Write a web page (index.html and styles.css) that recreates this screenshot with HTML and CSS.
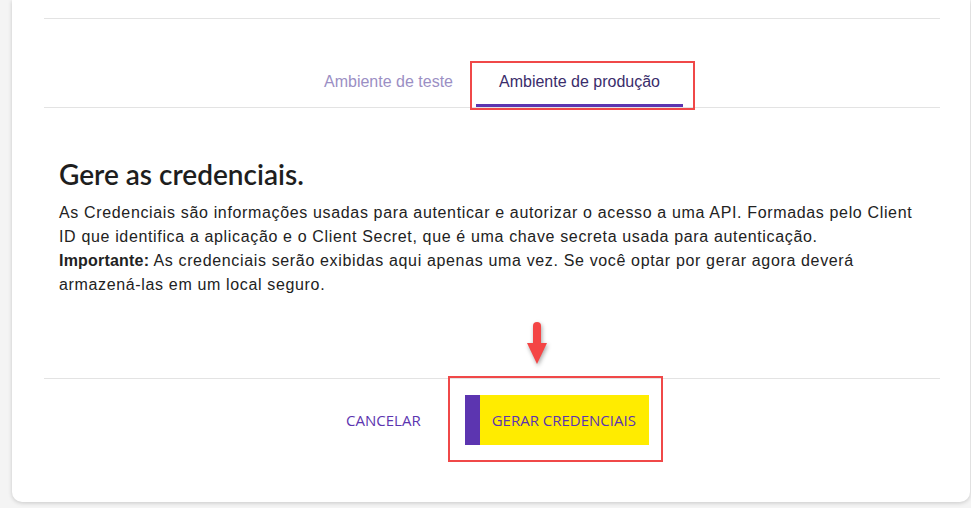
FILE: index.html
```html
<!DOCTYPE html>
<html lang="pt-BR">
<head>
  <meta charset="UTF-8"/>
  <title>Credenciais</title>
  <link rel="stylesheet" href="styles.css">
</head>
<body>
  <div class="card">
    <div class="top-rule"></div>

    <div class="tabs">
      <div class="tab">Ambiente de teste</div>
      <div class="tab active">Ambiente de produção</div>
    </div>

    <div class="content">
      <h2>Gere as credenciais.</h2>
      <p>
        As Credenciais são informações usadas para autenticar e autorizar o acesso a uma API. Formadas pelo Client
        ID que identifica a aplicação e o Client Secret, que é uma chave secreta usada para autenticação.<br>
        <strong>Importante:</strong> As credenciais serão exibidas aqui apenas uma vez. Se você optar por gerar agora deverá
        <span class="nowrap">armazená-las</span> em um local seguro.
      </p>
    </div>

    <!-- seta de destaque -->
    <div class="arrow">
      <svg width="26" height="44" viewBox="0 0 26 44">
        <path d="M13 4 L13 22" stroke="#f44545" stroke-width="8" stroke-linecap="round"/>
        <path d="M3 21 L23 21 L13 42 Z" fill="#f44545"/>
      </svg>
    </div>

    <div class="footer">
      <button class="btn-cancel">CANCELAR</button>
      <button class="btn-primary">GERAR CREDENCIAIS</button>
    </div>
  </div>
</body>
</html>
```

FILE: styles.css
```css
* {
  margin: 0; padding: 0; box-sizing: border-box;
}
body {
  background: #f4f4f4;
  font-family: "Liberation Sans", Arial, sans-serif;
  color: #222;
  height: 508px;
  overflow: hidden;
}
.card {
  position: relative;
  margin-left: 12px;
  width: 958px;
  height: 502px;
  background: #fff;
  border-radius: 0 0 10px 10px;
  box-shadow: 0 1px 4px rgba(0,0,0,0.18);
  padding: 18px 30px 0 32px;
}
.top-rule {
  border-top: 1px solid #e3e3e3;
}
.tabs {
  display: flex;
  justify-content: center;
  margin-top: 53px;
  border-bottom: 1px solid #e3e3e3;
}
.tab {
  position: relative;
  padding: 0 23px 15px;
  font-size: 16px;
  line-height: 20px;
  color: #9b8fc4;
}
.tab.active {
  color: #3a2d6b;
  border-bottom: 3px solid #5c35b0;
  padding-bottom: 12px;
}
/* moldura vermelha de anotação */
.tab.active::after {
  content: "";
  position: absolute;
  left: -6px; right: -12px; top: -11px; bottom: -6px;
  border: 2px solid #f04848;
}
.content {
  padding: 49px 15px 0;
  height: 270px;
}
h2 {
  font-family: "Lato", sans-serif;
  font-size: 28px;
  font-weight: 600;
  color: #1e1e1e;
  line-height: 34px;
  margin-bottom: 10px;
}
.content p {
  font-size: 16px;
  line-height: 24px;
  letter-spacing: 0.65px;
  color: #222;
  max-width: 866px;
}
.content strong {
  font-weight: bold;
  letter-spacing: 0.2px;
}
.nowrap {
  white-space: nowrap;
}
.arrow {
  position: absolute;
  left: 512px;
  top: 322px;
  filter: drop-shadow(1px 2px 2px rgba(0,0,0,0.35));
}
.footer {
  border-top: 1px solid #e3e3e3;
  display: flex;
  justify-content: center;
  align-items: center;
  gap: 44px;
  padding-top: 16px;
  padding-left: 11px;
}
button {
  font-family: "Open Sans", sans-serif;
  font-size: 15px;
  border: none;
  background: none;
  cursor: pointer;
  color: #5c35b0;
}
.btn-primary {
  position: relative;
  height: 50px;
  padding: 0 13px 0 27px;
  background: linear-gradient(to right, #5c35b0 15px, #ffec00 15px);
}
.btn-primary::after {
  content: "";
  position: absolute;
  left: -17px; right: -14px; top: -19px; bottom: -17px;
  border: 2px solid #f04848;
}
```
